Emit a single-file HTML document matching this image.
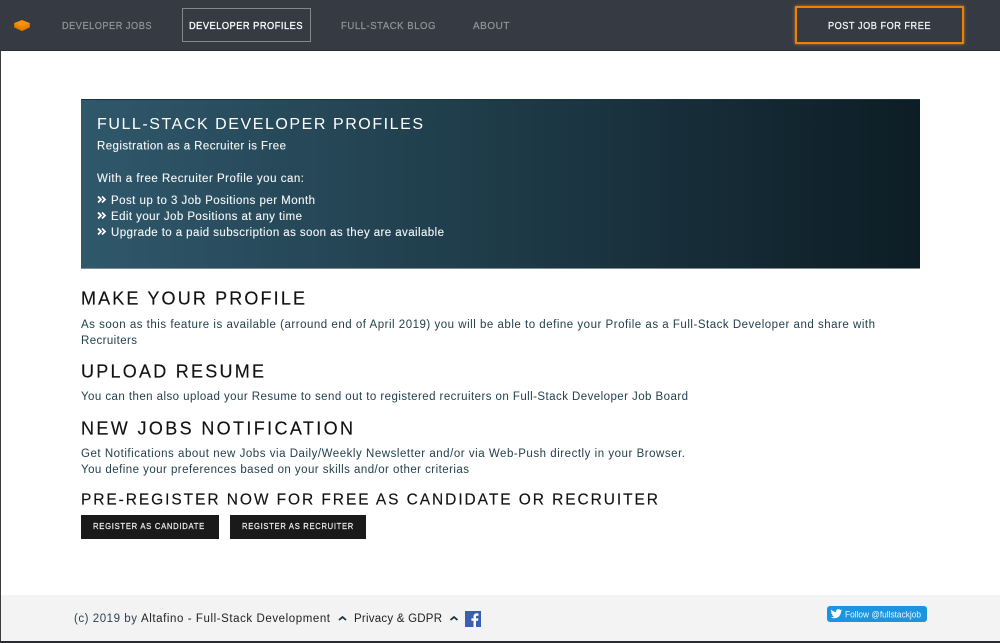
<!DOCTYPE html>
<html><head><meta charset="utf-8"><title>Full-Stack Developer Profiles</title>
<style>
html,body{margin:0;padding:0;width:1000px;height:643px;overflow:hidden;background:#fff}
.a{position:absolute}
svg{position:absolute;left:0;top:0}
text{font-family:"Liberation Sans",sans-serif}
</style></head><body>
<div class="a" style="left:0;top:0;width:1000px;height:50px;background:#363b43;border-bottom:1px solid #2b2f33"></div>
<div class="a" style="left:0;top:51px;width:1px;height:592px;background:#3a3c3e"></div>
<div class="a" style="left:182px;top:8px;width:127px;height:32px;border:1px solid #85888b"></div>
<div class="a" style="left:795px;top:6px;width:165px;height:34px;border:2px solid #f08000;box-shadow:0 0 3px #b87a30"></div>
<div class="a" style="left:81px;top:99px;width:839px;height:168px;background:linear-gradient(90deg,#2f586b 0%,#0d1d25 100%);border-top:1px solid #1c3340;border-bottom:1px solid #7f8c92"></div>
<div class="a" style="left:81px;top:515px;width:138px;height:24px;background:#1a1a1a"></div>
<div class="a" style="left:230px;top:515px;width:136px;height:24px;background:#1a1a1a"></div>
<div class="a" style="left:1px;top:595px;width:999px;height:46px;background:#f3f3f3"></div>
<div class="a" style="left:0;top:641px;width:1000px;height:2px;background:#2a2c30"></div>
<div class="a" style="left:827px;top:606px;width:100px;height:16px;background:#1b95e0;border-radius:3px"></div>
<svg width="1000" height="643" viewBox="0 0 1000 643">
<path d="M22 28l7.800-3.200v2.600L22 31l-7.800-3.600v-2.600z" fill="#e67d00"/>
<path d="M22 26l7.800-3.400v2.600L22 28.600l-7.800-3.400v-2.600z" fill="#ee8400"/>
<path d="M22 20l7.800 3.100L22 26.300l-7.800-3.200z" fill="#fa920c"/>
<g font-size="10.500" fill="#92959a" letter-spacing=".6" stroke="#92959a" stroke-width=".2">
<text x="62" y="29" textLength="90" lengthAdjust="spacingAndGlyphs">DEVELOPER JOBS</text>
<text x="341" y="29" textLength="95" lengthAdjust="spacingAndGlyphs">FULL-STACK BLOG</text>
<text x="473" y="29" textLength="37" lengthAdjust="spacingAndGlyphs">ABOUT</text>
</g>
<text x="189" y="29" font-size="10.500" fill="#fff" stroke="#fff" stroke-width=".3" letter-spacing=".6" textLength="114" lengthAdjust="spacingAndGlyphs">DEVELOPER PROFILES</text>
<text x="828" y="29" font-size="10.500" fill="#f2f4f6" stroke="#f2f4f6" stroke-width=".3" letter-spacing=".6" textLength="103" lengthAdjust="spacingAndGlyphs">POST JOB FOR FREE</text>

<text x="97" y="129" font-size="16" fill="#fff" textLength="326" lengthAdjust="spacing">FULL-STACK DEVELOPER PROFILES</text>
<g font-size="11.500" fill="#f4f6f7" stroke="#f4f6f7" stroke-width=".12">
<text x="97" y="149.500" textLength="189" lengthAdjust="spacing">Registration as a Recruiter is Free</text>
<text x="97" y="182" textLength="207" lengthAdjust="spacing">With a free Recruiter Profile you can:</text>
<text x="111" y="204" textLength="204" lengthAdjust="spacing">Post up to 3 Job Positions per Month</text>
<text x="111" y="220" textLength="191" lengthAdjust="spacing">Edit your Job Positions at any time</text>
<text x="111" y="236" textLength="333" lengthAdjust="spacing">Upgrade to a paid subscription as soon as they are available</text>
</g>
<g fill="none" stroke="#fff" stroke-width="1.700">
<path d="M98 196.500l3 3-3 3M102 196.500l3 3-3 3"/>
<path d="M98 212.500l3 3-3 3M102 212.500l3 3-3 3"/>
<path d="M98 228.500l3 3-3 3M102 228.500l3 3-3 3"/>
</g>

<g fill="#111" stroke="#111" stroke-width=".15">
<text x="81" y="304.500" font-size="18" textLength="224" lengthAdjust="spacing">MAKE YOUR PROFILE</text>
<text x="81" y="377.500" font-size="18" textLength="183" lengthAdjust="spacing">UPLOAD RESUME</text>
<text x="81" y="434.500" font-size="18" textLength="272" lengthAdjust="spacing">NEW JOBS NOTIFICATION</text>
<text x="81" y="504.500" font-size="15.500" textLength="577" lengthAdjust="spacing">PRE-REGISTER NOW FOR FREE AS CANDIDATE OR RECRUITER</text>
</g>
<g font-size="11.500" fill="#23404c">
<text x="81" y="328" textLength="794" lengthAdjust="spacing">As soon as this feature is available (arround end of April 2019) you will be able to define your Profile as a Full-Stack Developer and share with</text>
<text x="81" y="344" textLength="56" lengthAdjust="spacing">Recruiters</text>
<text x="81" y="400" textLength="607" lengthAdjust="spacing">You can then also upload your Resume to send out to registered recruiters on Full-Stack Developer Job Board</text>
<text x="81" y="457" textLength="604" lengthAdjust="spacing">Get Notifications about new Jobs via Daily/Weekly Newsletter and/or via Web-Push directly in your Browser.</text>
<text x="81" y="473" textLength="388" lengthAdjust="spacing">You define your preferences based on your skills and/or other criterias</text>
</g>
<g font-size="8.500" fill="#f2f2f2" stroke="#f2f2f2" stroke-width=".2" letter-spacing=".8">
<text x="93" y="529" textLength="112" lengthAdjust="spacingAndGlyphs">REGISTER AS CANDIDATE</text>
<text x="242" y="529" textLength="112" lengthAdjust="spacingAndGlyphs">REGISTER AS RECRUITER</text>
</g>

<g font-size="11.500">
<text x="74" y="622" fill="#2c4450" textLength="63" lengthAdjust="spacing">(c) 2019 by</text>
<text x="141" y="622" fill="#222" textLength="189" lengthAdjust="spacing">Altafino - Full-Stack Development</text>
<text x="354" y="622" fill="#222" textLength="88" lengthAdjust="spacing">Privacy &amp; GDPR</text>
</g>
<g fill="none" stroke="#17303a" stroke-width="1.800">
<path d="M339 620l3.500-3 3.500 3"/>
<path d="M450.500 620l3.500-3 3.500 3"/>
</g>
<rect x="465" y="611" width="16" height="16" fill="#3b5fb0"/>
<path d="M476 627v-6.200h2.100l.3-2.400H476v-1.500c0-.7.2-1.200 1.200-1.200h1.300v-2.200c-.5-.1-1.100-.1-1.800-.1-1.900 0-3.200 1.100-3.200 3.200v1.800h-2.100v2.400h2.100v6.200z" fill="#fff"/>
<path d="M842 610.300c-.4.200-.9.300-1.300.4.500-.3.800-.7 1-1.300-.4.300-.9.500-1.500.6a2.300 2.300 0 0 0-4 2.100c-1.900-.1-3.600-1-4.800-2.500-.6 1-.3 2.400.7 3.100-.4 0-.7-.1-1-.3 0 1.100.8 2.100 1.900 2.300-.3.100-.7.100-1 0 .3.900 1.200 1.600 2.200 1.600-1 .8-2.200 1.100-3.400 1 1 .7 2.300 1 3.600 1 4.300 0 6.700-3.600 6.600-6.900.5-.3.900-.7 1-1.100z" fill="#fff"/>
<text x="845" y="617.500" font-size="9.300" fill="#eaf5fd" textLength="76" lengthAdjust="spacingAndGlyphs">Follow @fullstackjob</text>
</svg>
</body></html>
